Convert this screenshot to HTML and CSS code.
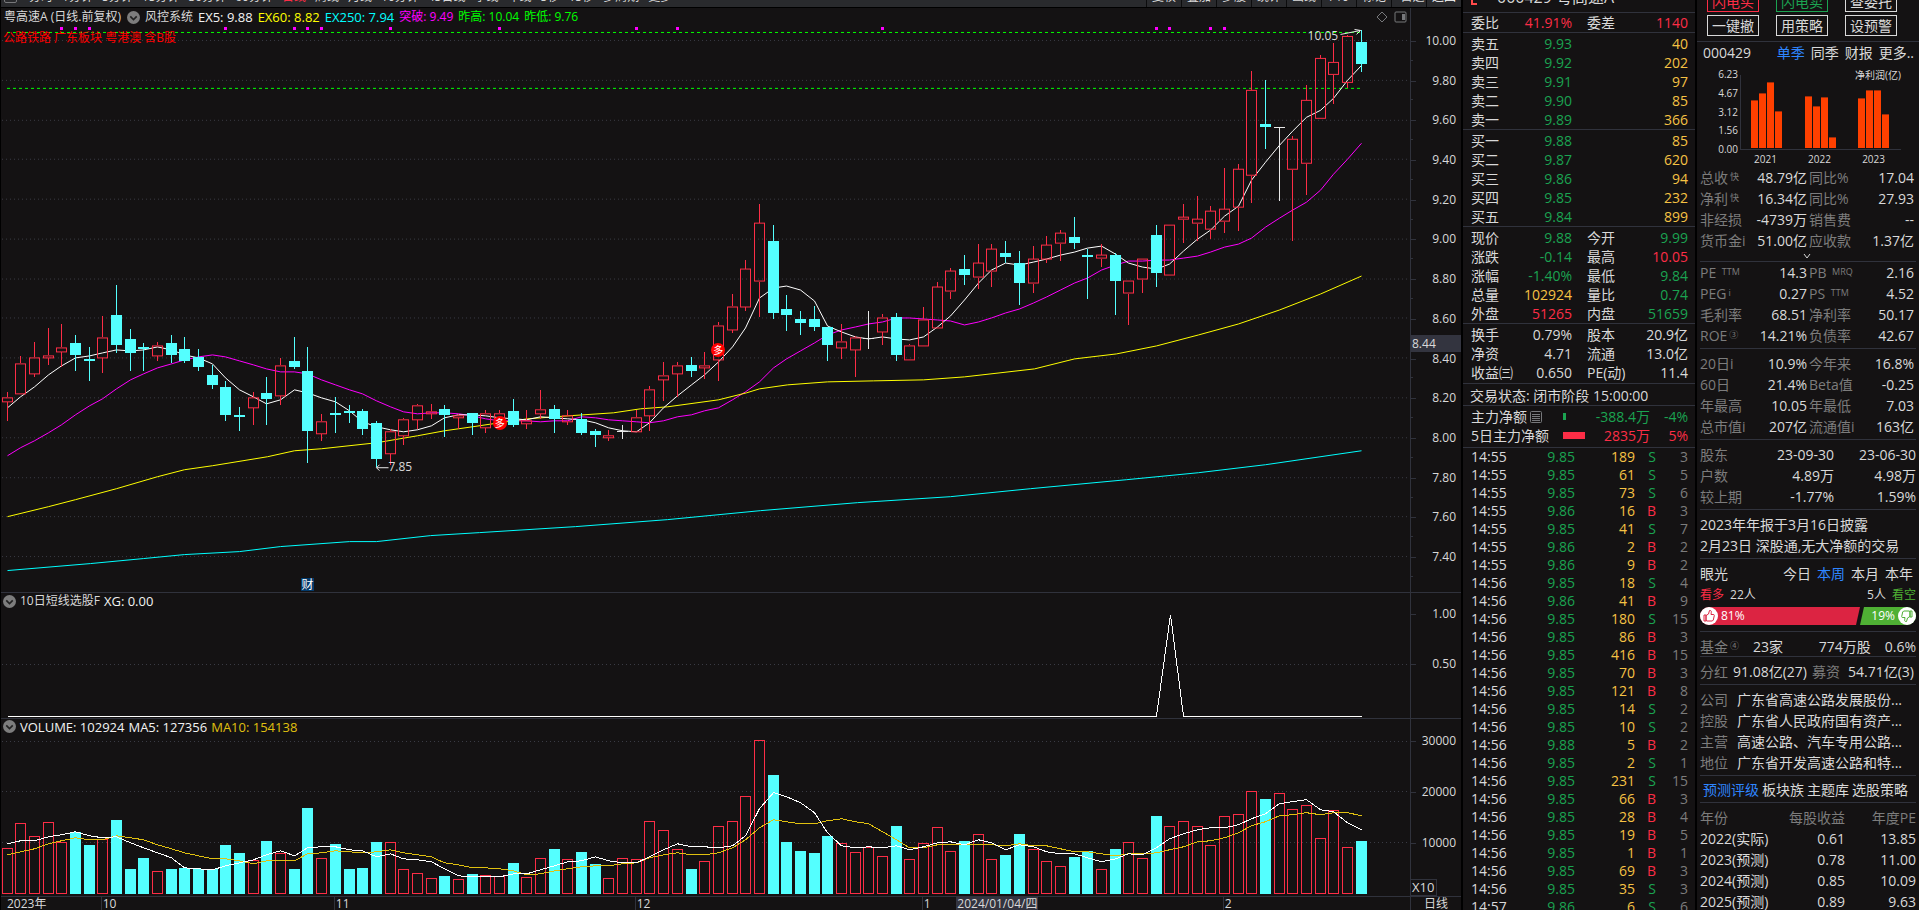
FILE: index.html
```html
<!DOCTYPE html>
<html lang="zh-CN">
<head>
<meta charset="utf-8">
<title>粤高速A 000429</title>
<link rel="stylesheet" href="styles.css">
</head>
<body>
<main class="app">
  <section class="chart">
    <nav class="toolbar">
      <div class="periods">
        <button class="menu-btn" aria-label="菜单"></button>
        <button>分时</button><button>1分钟</button><button>5分钟</button><button>15分钟</button><button>30分钟</button><button>60分钟</button><button class="active">日线</button><button>周线</button><button>月线</button><button>10分钟</button><button>45日线</button><button>季线</button><button>年线</button><button>5秒</button><button>15秒</button><button>多周期</button><button>更多&gt;</button>
      </div>
      <div class="tools">
        <button>复权</button><button>叠加</button><button>多股</button><button>统计</button><button>画线</button><button>F10</button><button>标记</button><button>+自选</button><button class="back">返回</button>
      </div>
    </nav>

    <div class="pane pane-main">
      <div class="plot">
        <svg id="kline" viewBox="1 8 1409 585" preserveAspectRatio="none" aria-hidden="true"></svg>
        <div class="legend">
          <span>粤高速A (日线.前复权)</span>
          <button class="fold" aria-label="指标"><svg viewBox="0 0 12 12"><path d="M3 5l3 3 3-3"/></svg></button>
          <span>风控系统</span>
          <span class="latin c-white">EX5: 9.88</span>
          <span class="latin c-yellow">EX60: 8.82</span>
          <span class="latin c-aqua">EX250: 7.94</span>
          <span class="c-magenta">突破: 9.49</span>
          <span class="c-lime">昨高: 10.04</span>
          <span class="c-lime">昨低: 9.76</span>
        </div>
        <p class="tags">公路铁路 广东板块 粤港澳 含B股</p>
        <div class="corner">
          <svg width="12" height="12" viewBox="0 0 12 12"><path d="M6 1l5 5-5 5-5-5z"/></svg>
          <svg width="13" height="12" viewBox="0 0 13 12"><rect x="1" y="1" width="11" height="10" rx="1"/><path class="solid" d="M8 3h3v6H8z"/></svg>
        </div>
        <span class="mark badge badge-a">多</span>
        <span class="mark badge badge-b">多</span>
        <span class="mark low">7.85</span>
        <span class="mark high">10.05</span>
        <span class="mark report">财</span>
      </div>
      <div class="axis">
        <span>10.00</span><span>9.80</span><span>9.60</span><span>9.40</span><span>9.20</span><span>9.00</span><span>8.80</span><span>8.60</span><span>8.40</span><span>8.20</span><span>8.00</span><span>7.80</span><span>7.60</span><span>7.40</span>
        <b class="cursor-price">8.44</b>
      </div>
    </div>

    <div class="pane pane-signal">
      <div class="plot">
        <svg id="signal" viewBox="1 594 1409 124" preserveAspectRatio="none" aria-hidden="true"></svg>
        <div class="legend">
          <button class="fold" aria-label="指标"><svg viewBox="0 0 12 12"><path d="M3 5l3 3 3-3"/></svg></button>
          <span>10日短线选股F</span>
          <span class="latin c-white">XG: 0.00</span>
        </div>
      </div>
      <div class="axis"><span>1.00</span><span>0.50</span></div>
    </div>

    <div class="pane pane-volume">
      <div class="plot">
        <svg id="volume" viewBox="1 719 1409 177" preserveAspectRatio="none" aria-hidden="true"></svg>
        <div class="legend">
          <button class="fold" aria-label="指标"><svg viewBox="0 0 12 12"><path d="M3 5l3 3 3-3"/></svg></button>
          <span class="latin c-white">VOLUME: 102924</span>
          <span class="latin c-white">MA5: 127356</span>
          <span class="latin c-gold">MA10: 154138</span>
        </div>
      </div>
      <div class="axis"><span>30000</span><span>20000</span><span>10000</span><b class="scale">X10</b></div>
    </div>

    <div class="timeline">
      <div class="months">
        <span class="m0">2023年</span><span class="m1">10</span><span class="m2">11</span><span class="m3">12</span><span class="m4">1</span><span class="m5">2</span>
        <b class="cursor-date">2024/01/04/四</b>
      </div>
      <span class="period">日线</span>
    </div>
  </section>

  <section class="quote">
    <h1 class="title"><i></i>000429 粤高速A</h1>
    <div class="pairs ratio"><span>委比</span><b class="up">41.91%</b><span>委差</span><b class="up">1140</b></div>
    <table class="book">
      <tr><th>卖五</th><td>9.93</td><td>40</td></tr>
      <tr><th>卖四</th><td>9.92</td><td>202</td></tr>
      <tr><th>卖三</th><td>9.91</td><td>97</td></tr>
      <tr><th>卖二</th><td>9.90</td><td>85</td></tr>
      <tr><th>卖一</th><td>9.89</td><td>366</td></tr>
    </table>
    <table class="book">
      <tr><th>买一</th><td>9.88</td><td>85</td></tr>
      <tr><th>买二</th><td>9.87</td><td>620</td></tr>
      <tr><th>买三</th><td>9.86</td><td>94</td></tr>
      <tr><th>买四</th><td>9.85</td><td>232</td></tr>
      <tr><th>买五</th><td>9.84</td><td>899</td></tr>
    </table>
    <div class="pairs">
      <span>现价</span><b class="down">9.88</b><span>今开</span><b class="down">9.99</b>
      <span>涨跌</span><b class="down">-0.14</b><span>最高</span><b class="up">10.05</b>
      <span>涨幅</span><b class="down">-1.40%</b><span>最低</span><b class="down">9.84</b>
      <span>总量</span><b class="vol">102924</b><span>量比</span><b class="down">0.74</b>
      <span>外盘</span><b class="up">51265</b><span>内盘</span><b class="down">51659</b>
    </div>
    <div class="pairs last">
      <span>换手</span><b>0.79%</b><span>股本</span><b>20.9亿</b>
      <span>净资</span><b>4.71</b><span>流通</span><b>13.0亿</b>
      <span>收益㈢</span><b>0.650</b><span>PE(动)</span><b>11.4</b>
    </div>
    <p class="status">交易状态: 闭市阶段 15:00:00</p>
    <div class="flow">
      <span class="flow-name">主力净额<svg width="12" height="12" viewBox="0 0 12 12"><rect x=".5" y=".5" width="11" height="11" rx="1"/><path d="M2 3.500h8M2 5.500h8M2 7.500h8M2 9.500h8"/></svg></span><i class="bar bar-down"></i><b class="down">-388.4万</b><b class="down">-4%</b>
      <span>5日主力净额</span><i class="bar bar-up"></i><b class="up">2835万</b><b class="up">5%</b>
    </div>
    <table class="ticks"><tbody id="ticks"></tbody></table>
  </section>

  <aside class="side">
    <div class="actions">
      <button class="buy">闪电买</button><button class="sell">闪电卖</button><button>查委托</button>
      <button>一键撤</button><button>用策略</button><button>设预警</button>
    </div>
    <div class="code-row"><b>000429</b><a href="#" class="on">单季</a><a href="#">同季</a><a href="#">财报</a><a href="#">更多..</a></div>
    <div class="profit">
      <div class="profit-axis"><span>6.23</span><span>4.67</span><span>3.12</span><span>1.56</span><span>0.00</span></div>
      <div class="profit-plot">
        <span class="profit-name">净利润(亿)</span>
        <div class="bars" id="bars"></div>
        <div class="years"><span>2021</span><span>2022</span><span>2023</span></div>
      </div>
    </div>
    <div class="metrics first">
      <span>总收<sup>快</sup></span><b>48.79亿</b><span>同比%</span><b>17.04</b>
      <span>净利<sup>快</sup></span><b>16.34亿</b><span>同比%</span><b>27.93</b>
      <span>非经损</span><b>-4739万</b><span>销售费</span><b>--</b>
      <span>货币金i</span><b>51.00亿</b><span>应收款</span><b>1.37亿</b>
      <button class="expand" aria-label="展开"><svg width="8" height="6" viewBox="0 0 8 6"><path d="M1 1l3 4 3-4"/></svg></button>
    </div>
    <div class="metrics tight">
      <span>PE <sup>TTM</sup></span><b>14.3</b><span>PB <sup class="wide">MRQ</sup></span><b>2.16</b>
      <span>PEG<sup>i</sup></span><b>0.27</b><span>PS <sup class="wide">TTM</sup></span><b>4.52</b>
      <span>毛利率</span><b>68.51</b><span>净利率</span><b>50.17</b>
      <span>ROE<sup>③</sup></span><b>14.21%</b><span>负债率</span><b>42.67</b>
    </div>
    <div class="metrics">
      <span>20日i</span><b>10.9%</b><span>今年来</span><b>16.8%</b>
      <span>60日</span><b>21.4%</b><span>Beta值</span><b>-0.25</b>
      <span>年最高</span><b>10.05</b><span>年最低</span><b>7.03</b>
      <span>总市值i</span><b>207亿</b><span>流通值i</span><b>163亿</b>
    </div>
    <table class="holders">
      <tr><th>股东</th><td>23-09-30</td><td>23-06-30</td></tr>
      <tr><th>户数</th><td>4.89万</td><td>4.98万</td></tr>
      <tr><th>较上期</th><td>-1.77%</td><td>1.59%</td></tr>
    </table>
    <div class="news"><p>2023年年报于3月16日披露</p><p>2月23日 深股通,无大净额的交易</p></div>
    <div class="vote">
      <div class="vote-head"><b>眼光</b><a href="#">今日</a><a href="#" class="on">本周</a><a href="#">本月</a><a href="#">本年</a></div>
      <div class="vote-count"><span class="bull">看多</span><span>22人</span><span class="right">5人</span><span class="bear">看空</span></div>
      <div class="vote-bar">
        <div class="bull-bar"><i><svg viewBox="0 0 18 18"><path d="M4 8h2v6H4zM6 13.500V8.500L8.500 7 9.500 3.500c1.500-.3 2 .7 1.800 1.800L11 7.500h2.800l.5 1-1 4.500-1 1H7z"/></svg></i>81%</div>
        <div class="bear-bar">19%<i><svg viewBox="0 0 18 18"><path d="M14 10h-2V4h2zM12 4.500v5L9.500 11l-1 3.500c-1.500.3-2-.7-1.800-1.800L7 10.500H4.200l-.5-1 1-4.500 1-1H11z"/></svg></i></div>
      </div>
    </div>
    <div class="line-row fund"><span>基金<sup>④</sup></span><b>23家</b><b class="right">774万股</b><b>0.6%</b></div>
    <div class="line-row bonus"><span>分红</span><b>91.08亿(27)</b><span>募资</span><b class="right">54.71亿(3)</b></div>
    <dl class="company">
      <dt>公司</dt><dd>广东省高速公路发展股份...</dd>
      <dt>控股</dt><dd>广东省人民政府国有资产...</dd>
      <dt>主营</dt><dd>高速公路、汽车专用公路...</dd>
      <dt>地位</dt><dd>广东省开发高速公路和特...</dd>
    </dl>
    <nav class="tabs"><a href="#" class="on">预测评级</a><a href="#">板块族</a><a href="#">主题库</a><a href="#">选股策略</a></nav>
    <table class="forecast">
      <tr><th>年份</th><th>每股收益</th><th>年度PE</th></tr>
      <tr><td>2022(实际)</td><td>0.61</td><td>13.85</td></tr>
      <tr><td>2023(预测)</td><td>0.78</td><td>11.00</td></tr>
      <tr><td>2024(预测)</td><td>0.85</td><td>10.09</td></tr>
      <tr><td>2025(预测)</td><td>0.89</td><td>9.63</td></tr>
    </table>
  </aside>
</main>
<script src="chart.js"></script>
</body>
</html>
```
FILE: styles.css
```css
:root {
  --bg: #141213;
  --line: #30323c;
  --text: #d9d9d9;
  --dim: #7c7c7c;
  --up: #fc2d46;
  --down: #1ba351;
  --gold: #f6c244;
  --cyan: #54ffff;
  --blue: #2f86ff;
}
* { box-sizing: border-box; margin: 0; padding: 0; }
body { background: #000; color: var(--text); font: 14px/19px "Open Sans", "Noto Sans CJK SC", sans-serif; overflow: hidden; }
button { background: none; border: 0; color: inherit; font: inherit; }
a { color: inherit; text-decoration: none; }
b, th, i, h1 { font-weight: 400; font-style: normal; }
table { border-collapse: collapse; }
.app { display: flex; gap: 2px; height: 100vh; overflow: hidden; white-space: nowrap; }

/* Chart column */
.chart { flex: 1; min-width: 0; display: flex; flex-direction: column; padding-left: 1px; font-size: 12px; line-height: 16px; }
.toolbar { display: flex; justify-content: space-between; flex: none; height: 25px; margin-top: -18px; margin-bottom: 1px; background: #292a2d; }
.periods { display: flex; align-items: center; gap: 9px; padding-left: 3px; padding-top: 4px; }
.menu-btn { width: 13px; height: 13px; margin-right: 3px; border: 1px solid #77787b; border-radius: 2px; }
.periods .active { color: var(--up); }
.tools { display: flex; }
.tools button { width: 35px; border-left: 1px solid #0c0c0d; padding-top: 4px; }
.tools .back { color: #fff; }
.pane { display: flex; min-height: 0; background: var(--bg); border-bottom: 1px solid var(--line); }
.pane-main { flex: 586 0 0; }
.pane-signal { flex: 125 0 0; }
.pane-volume { flex: 178 0 0; }
.plot { position: relative; flex: 1; min-width: 0; overflow: hidden; }
.plot > svg { display: block; width: 100%; height: 100%; shape-rendering: crispEdges; }
.axis { position: relative; display: flex; flex-direction: column; flex: none; width: 51px; padding-right: 5px; border-left: 1px solid var(--line); text-align: right; }
.axis span { position: relative; line-height: 20px; }
.axis span::before { content: ""; position: absolute; left: 0; top: 50%; width: 5px; height: 1px; background: var(--line); }
.pane-main .axis { padding-top: 13px; padding-bottom: 15px; }
.pane-main .axis span { display: flex; flex: 1; align-items: center; justify-content: flex-end; }
.pane-main .axis span::after { content: ""; position: absolute; left: 0; bottom: 0; width: 2px; height: 1px; background: var(--line); }
.pane-signal .axis { gap: 30px; padding-top: 11px; }
.pane-volume .axis { gap: 31px; padding-top: 12px; }
.cursor-price { position: absolute; left: 0; right: 0; top: 56%; background: #33343f; line-height: 17px; text-align: left; padding-left: 1px; }
.scale { position: absolute; left: 0; bottom: 0; border: 1px solid var(--line); border-left: 0; padding: 0 2px 0 1px; font-size: 13px; line-height: 15px; }
.legend { position: absolute; left: 3px; top: 0; display: flex; align-items: center; gap: 5px; line-height: 16px; padding-top: 1px; }
.pane-signal .legend, .pane-volume .legend { left: 1px; padding-top: 0; gap: 4px; }
.latin { font-size: 13px; }
.fold { width: 13px; height: 13px; margin: 0 0 0 1px; border-radius: 50%; background: #7d7d7d; }
.fold svg { display: block; fill: none; stroke: #222; stroke-width: 1.5; }
.c-white { color: #f2f2f2; }
.c-yellow { color: #ff0; }
.c-aqua { color: #0ff; }
.c-magenta { color: #f0f; }
.c-lime { color: #0f0; }
.c-gold { color: #e0c010; }
.tags { position: absolute; left: 2px; top: 22px; color: #f00; }
.corner { position: absolute; right: 3px; top: 3px; display: flex; gap: 6px; }
.corner svg { fill: none; stroke: #77787b; }
.corner .solid { fill: #77787b; stroke: none; }
.mark { position: absolute; }
.badge { width: 14px; height: 14px; margin: -7px 0 0 -7px; border-radius: 50%; background: #f00; color: #fff; font-size: 10px; line-height: 14px; text-align: center; }
.badge-a { left: 35.4%; top: 71.1%; }
.badge-b { left: 50.9%; top: 58.6%; }
.low { left: 27.5%; top: 77.3%; }
.high { right: 5.1%; top: 3.5%; }
.report { left: 21.3%; top: 97.6%; width: 13px; height: 13px; background: #033a6b; color: #fff; line-height: 13px; text-align: center; }
.timeline { display: flex; flex: none; height: 13px; background: var(--bg); line-height: 14px; overflow: hidden; }
.months { position: relative; display: flex; flex: 1; min-width: 0; }
.months > span { flex: 187 0 0; min-width: 0; border-left: 1px solid var(--line); text-indent: 1px; }
.months .m0 { flex-grow: 100; border: 0; text-indent: 6px; }
.months .m1 { flex-grow: 233; }
.months .m2 { flex-grow: 301; }
.months .m3 { flex-grow: 287; }
.months .m4 { flex-grow: 301; }
.cursor-date { position: absolute; left: 67.8%; background: #33343f; padding: 0 1px; }
.period { flex: none; width: 51px; border-left: 1px solid var(--line); padding-left: 13px; }

/* Quote column */
.quote { flex: none; width: 232px; overflow: hidden; background: var(--bg); }
.quote > * { border-bottom: 1px solid var(--line); }
.title { display: flex; gap: 20px; height: 33px; margin-top: -20px; padding-left: 8px; font-size: 16px; line-height: 34px; }
.title i { width: 6px; margin-bottom: 7px; border: solid #ff4a4a; border-width: 0 0 2px 2px; }
.pairs { display: grid; grid-template-columns: auto 1fr auto 1fr; padding: 1px 7px 0 8px; }
.pairs span { min-width: 42px; }
.pairs b { text-align: right; }
.pairs span:nth-child(4n+3) { margin-left: 15px; }
.pairs.ratio { padding-top: 0; }
.pairs.last { padding-bottom: 1px; margin-bottom: 2px; }
.up { color: var(--up); }
.down { color: var(--down); }
.vol { color: var(--gold); }
.book { display: block; padding: 1px 7px 0 8px; }
.book tbody { display: block; }
.book tr { display: grid; grid-template-columns: 42px 59px 1fr; }
.book th { text-align: left; }
.book td { color: var(--down); text-align: right; }
.book td:last-child { color: var(--gold); }
.status { padding-left: 7px; }
.flow { display: grid; grid-template-columns: 92px 22px 1fr 38px; padding: 1px 7px 2px 8px; }
.flow b { text-align: right; }
.flow-name { display: flex; align-items: center; gap: 3px; }
.flow-name svg { fill: none; stroke: #77787b; }
.bar { align-self: center; height: 7px; }
.bar-down { width: 3px; background: var(--down); }
.bar-up { background: var(--up); }
.quote .ticks { display: block; border: 0; padding: 0 7px 0 8px; }
.ticks tbody { display: block; }
.ticks tr { display: grid; grid-template-columns: 44px 60px 60px 21px 1fr; line-height: 18px; }
.ticks td { text-align: right; }
.ticks td:first-child { text-align: left; }
.ticks td:nth-child(2) { color: var(--down); }
.ticks td:nth-child(3) { color: var(--gold); }
.ticks td:last-child { color: var(--dim); }

/* Side column */
.side { flex: none; width: 222px; overflow: hidden; background: var(--bg); line-height: 21px; }
.side > * { margin: 0 3px; border-bottom: 1px solid var(--line); }
.side .actions { display: grid; grid-template-columns: repeat(3, 52px); gap: 3px 17px; margin: -9px 0 0; padding: 0 0 5px 10px; }
.actions button { height: 21px; border: 1px solid var(--text); line-height: 19px; }
.actions .buy { color: var(--up); border-color: var(--up); }
.actions .sell { color: var(--down); border-color: var(--down); }
.side .code-row { display: flex; gap: 6px; margin: 0; padding: 0 5px 1px 6px; border: 0; }
.code-row b { flex: 1; }
.on { color: var(--blue); }
.side .profit { display: flex; border: 0; font-size: 10px; line-height: 12px; padding: 4px 0 0; }
.profit-axis { display: flex; flex-direction: column; justify-content: space-between; width: 38px; height: 87px; text-align: right; }
.profit-plot { position: relative; flex: 1; margin: 7px 15px 0 2px; }
.profit-name { position: absolute; right: 0; top: -6px; }
.bars { display: flex; justify-content: space-between; height: 75px; padding: 0 12px 1px 10px; border: solid var(--line); border-width: 0 0 1px 1px; }
.group { display: flex; align-items: flex-end; gap: 1px; }
.group i { width: 7px; background: #ff4000; border-top: 1px solid #a02c08; }
.years { display: flex; justify-content: space-between; padding: 3px 16px 0 14px; }
.metrics { display: grid; grid-template-columns: 50px 57px 50px 57px; padding: 4px 2px 2px 0; }
.metrics b { text-align: right; }
.metrics span { color: var(--dim); }
.metrics span:nth-of-type(even) { padding-left: 2px; }
.metrics.first { padding-top: 2px; padding-bottom: 0; }
.metrics.tight { padding-top: 0; }
sup { font-size: 9px; line-height: 0; vertical-align: 3px; padding-left: 2px; }
.expand { grid-column: 1 / -1; height: 10px; line-height: 0; }
.expand svg { fill: none; stroke: var(--text); }
.holders { display: block; padding: 4px 0 2px; }
.holders tbody { display: block; }
.holders tr { display: grid; grid-template-columns: 50px 1fr 82px; }
.holders th, .line-row span { color: var(--dim); text-align: left; }
.holders td { text-align: right; }
.news { padding: 4px 0 2px; }
.vote { padding: 4px 0 6px; }
.vote-head { display: flex; gap: 6px; padding-right: 3px; }
.vote-head b { flex: 1; }
.vote-count { display: flex; gap: 6px; font-size: 12px; padding-bottom: 2px; height: 23px; }
.right { margin-left: auto; }
.bull { color: var(--up); }
.bear { color: #4fb034; }
.vote-bar { display: flex; height: 18px; color: #fff; font-size: 12px; line-height: 18px; }
.bull-bar { flex: 160 0 0; display: flex; gap: 3px; background: #dc2442; border-radius: 9px 0 0 9px; clip-path: polygon(0 0, 100% 0, calc(100% - 4px) 100%, 0 100%); }
.bear-bar { flex: 56 0 0; display: flex; gap: 3px; justify-content: flex-end; background: #4fb034; border-radius: 0 9px 9px 0; clip-path: polygon(4px 0, 100% 0, 100% 100%, 0 100%); }
.vote-bar i { width: 18px; height: 18px; border-radius: 50%; background: #fff; }
.vote-bar svg { display: block; fill: none; stroke: #dc2442; }
.bear-bar svg { stroke: #4fb034; }
.line-row { display: flex; }
.fund { gap: 14px; line-height: 18px; padding-top: 6px; }
.bonus { gap: 5px; padding: 4px 2px 2px 0; }
.bonus .right { margin-left: 0; flex: 1; text-align: right; }
.company { display: grid; grid-template-columns: 37px 1fr; padding: 4px 0 2px; }
.company dt { color: var(--dim); }
.tabs { display: flex; gap: 3px; padding: 3px 0 2px 3px; }
.side .forecast { display: block; border: 0; padding-top: 4px; }
.forecast tbody { display: block; }
.forecast tr { display: grid; grid-template-columns: 75px 70px 1fr; }
.forecast th { color: var(--dim); }
.forecast th, .forecast td { text-align: right; }
.forecast tr > :first-child { text-align: left; }
```
FILE: chart.js
```javascript
const NS = 'http://www.w3.org/2000/svg';
const RED = '#fc2d46', CYAN = '#54ffff', WHITE = '#e8e8e8', GRID = '#3a3b44';
const X = i => Math.floor(7 + 13.68 * i);

function add(svg, name, attrs) {
  const el = document.createElementNS(NS, name);
  for (const key in attrs) el.setAttribute(key, attrs[key]);
  svg.appendChild(el);
  return el;
}
const rect = (svg, x, y, width, height, fill) => add(svg, 'rect', { x, y, width, height, fill });
const hollow = (svg, x, y, w, h) =>
  add(svg, 'rect', { x: x + .5, y: y + .5, width: w - 1, height: Math.max(h - 1, 1), fill: 'none', stroke: RED });
const poly = (svg, pts, stroke) =>
  add(svg, 'polyline', { points: pts.map(p => (p[0] + .5) + ',' + (p[1] + .5)).join(' '), fill: 'none', stroke });
const series = (svg, ys, stroke) => poly(svg, ys.map((y, i) => [X(i), y]), stroke);
const dotted = (svg, y) =>
  add(svg, 'line', { x1: 2, x2: 1408, y1: y + .5, y2: y + .5, stroke: GRID, 'stroke-dasharray': '1 3' });

/* kind, high, body top, body bottom, low */
const candles = `u 393 398 402 422|u 357 364 394 395|u 343 358 374 378|u 329 356 358 366|u 325 348 352 368|d 336 344 356 372|d 348 360 362 382|u 317 338 358 374|d 285 316 346 354|d 330 340 354 372
d 344 348 350 372|u 343 346 356 362|d 336 344 356 364|d 338 350 362 364|d 350 358 368 372|d 366 376 386 390|d 382 388 416 422|d 408 416 418 432|u 393 398 408 426|d 378 394 400 426
u 359 366 396 406|d 338 362 368 370|d 348 372 432 464|u 415 422 434 442|d 398 414 416 434|d 406 412 414 424|d 410 412 430 436|d 422 424 460 468|u 430 432 454 466|u 419 420 436 446
u 405 406 420 430|u 405 412 414 420|d 406 410 416 438|u 415 416 418 430|d 414 414 424 436|u 411 414 428 434|u 411 414 424 426|d 400 412 426 428|u 411 421 424 430|u 391 410 414 420
d 406 410 420 434|u 411 416 422 426|d 414 420 434 436|d 430 432 436 448|u 431 436 438 442|w 426 432 432 440|u 411 418 432 433|u 387 390 416 432|u 363 376 380 402|u 363 366 374 398
d 358 366 372 378|u 353 366 368 380|u 323 326 360 382|u 294 307 330 334|u 260 269 307 312|u 204 223 281 318|d 225 241 314 320|d 295 310 316 332|d 312 320 324 336|d 307 320 328 332
d 328 328 346 362|u 325 342 348 360|u 337 338 350 378|w 312 339 339 350|u 315 318 332 346|d 314 318 356 362|u 345 346 360 361|u 308 320 346 347|u 282 287 328 328|u 268 271 291 299
d 255 269 275 285|u 244 263 277 289|u 244 249 271 287|d 241 253 257 263|d 251 263 283 305|u 246 259 283 293|u 236 245 259 263|u 230 233 243 261|d 217 237 243 249|d 249 255 257 299
u 244 255 258 267|d 253 255 281 316|u 281 281 293 326|u 259 259 279 293|d 225 235 273 287|u 225 225 275 275|u 204 217 219 243|u 196 219 223 241|u 206 211 229 239|u 168 209 221 233
u 164 169 207 231|u 71 90 175 203|d 80 124 127 149|w 127 127 127 201|u 136 139 169 241|u 85 100 163 195|u 55 58 118 118|u 43 62 74 104|u 35 36 82 88|d 30 42 64 72`
  .split(/[|\n]/).map(s => { const p = s.split(' '); return [p[0], ...p.slice(1).map(Number)]; });

const ex5 = [408,397,387,375,366,358,356,353,350,351,350,347,350,355,358,364,378,390,397,404,400,390,393,398,402,411,422,427,430,432,430,426,418,415,415,416,418,419,420,417,418,419,420,423,428,431,432,423,408,396,385,375,362,347,328,298,288,286,290,301,326,332,337,339,337,339,340,337,327,316,300,283,270,263,265,262,259,255,252,248,246,254,263,267,269,264,251,239,230,216,206,180,162,145,131,117,110,98,80,65];
const breakLine = [456,448,441,433,425,415,406,399,389,380,374,368,364,360,357,355,357,361,365,369,372,372,374,380,385,390,394,401,407,412,414,413,413,414,416,419,421,421,421,422,421,421,417,418,420,421,422,423,421,417,415,411,408,400,392,382,368,359,351,343,335,330,327,324,322,318,318,319,320,321,325,322,318,313,309,303,297,290,283,278,270,265,261,261,260,260,258,256,252,247,244,238,227,218,210,202,190,174,159,143];
const ex60 = [[7,517],[48,507],[75,500],[116,489],[157,477],[184,470],[212,466],[267,457],[294,451],[321,449],[376,443],[417,436],[444,431],[472,427],[499,423],[527,419],[568,416],[613,413],[640,409],[667,407],[718,400],[746,393],[759,389],[787,385],[827,382],[873,381],[923,380],[964,377],[1034,369],[1074,359],[1116,354],[1156,346],[1198,335],[1238,324],[1279,310],[1320,294],[1361,276]];
const ex250 = [[7,571],[90,564],[143,559],[184,555],[239,552],[280,547],[349,542],[376,542],[430,536],[479,533],[575,527],[667,520],[760,511],[857,503],[950,497],[1030,489],[1126,480],[1198,473],[1265,465],[1361,451]];
const signals = [4,5,6,16,21,22,23,28,36,46,49,64,84,85,88,89];

const k = document.getElementById('kline');
for (const y of [40,80,120,159,199,239,279,318,358,398,438,478,517,557]) dotted(k, y);
for (const y of [32, 88])
  add(k, 'line', { x1: 7, x2: 1360, y1: y + .5, y2: y + .5, stroke: '#0f0', 'stroke-dasharray': '3 3' });
for (const i of signals) rect(k, X(i) - 1, 27, 3, 3, '#f0f');
series(k, breakLine, '#f0f');
poly(k, ex60, '#ff0');
poly(k, ex250, '#0ff');
series(k, ex5, '#fff');
candles.forEach(([kind, hi, top, bottom, lo], i) => {
  const x = X(i);
  if (kind === 'd') {
    rect(k, x, hi, 1, lo - hi, CYAN);
    rect(k, x - 5, top, 11, Math.max(bottom - top, 2), CYAN);
  } else if (kind === 'w') {
    rect(k, x, hi, 1, lo - hi, WHITE);
    rect(k, x - 5, top, 11, 1, WHITE);
  } else {
    rect(k, x, hi, 1, top - hi, RED);
    rect(k, x, bottom + 1, 1, Math.max(lo - bottom - 1, 0), RED);
    hollow(k, x - 5, top, 11, bottom - top + 1);
  }
});
poly(k, [[388, 468], [376, 468], [379, 465]], WHITE);
poly(k, [[376, 468], [379, 471]], WHITE);
poly(k, [[1340, 34], [1360, 30], [1354, 29]], WHITE);
poly(k, [[1360, 30], [1356, 34]], WHITE);

const s = document.getElementById('signal');
dotted(s, 665);
poly(s, [[X(0), 716], [1156, 716], [1170, 615], [1183, 716], [1361, 716]], '#fff');

const volTop = [848,823,836,822,842,832,845,839,820,869,858,871,869,868,869,869,845,853,860,841,853,869,808,858,844,869,868,842,842,869,873,878,876,879,874,875,876,863,877,858,849,859,852,864,878,858,859,821,830,849,869,861,826,821,796,740,775,842,851,853,836,843,852,847,856,826,859,843,827,851,841,834,859,855,834,849,861,866,857,851,869,849,842,858,816,826,821,826,845,816,814,791,799,793,809,805,838,810,847,841];
const ma5 = [843,840,840,836,834,831,835,837,836,842,847,852,857,867,868,869,865,862,859,854,850,855,847,846,846,849,850,856,853,858,859,861,868,875,876,876,876,873,873,869,865,861,860,856,860,862,862,856,849,843,846,846,847,845,835,808,792,796,802,812,832,845,847,846,847,845,849,846,842,841,844,839,842,849,844,846,851,853,853,857,861,858,853,854,847,838,833,829,827,827,824,818,813,803,801,799,809,811,822,829];
const ma10 = [854,851,848,843,840,837,839,839,835,837,839,844,848,852,855,858,858,860,863,860,860,860,853,852,850,851,852,851,849,852,854,856,862,864,867,867,868,870,874,873,870,868,866,865,865,863,862,857,854,852,854,854,852,847,839,827,819,821,823,823,820,818,821,823,831,839,847,847,844,844,844,844,844,845,843,845,845,848,851,851,853,855,853,853,852,849,846,841,840,837,832,825,821,815,814,812,814,812,812,815];
const v = document.getElementById('volume');
for (const y of [741, 791, 842]) dotted(v, y);
volTop.forEach((y, i) => {
  if (candles[i][0] === 'd') rect(v, X(i) - 5, y, 11, 894 - y, CYAN);
  else hollow(v, X(i) - 5, y, 11, 894 - y);
});
series(v, ma10, '#e0c010');
series(v, ma5, '#fff');

const ticks = `14:55 9.85 189 S 3|14:55 9.85 61 S 5|14:55 9.85 73 S 6|14:55 9.86 16 B 3|14:55 9.85 41 S 7|14:55 9.86 2 B 2|14:55 9.86 9 B 2|14:56 9.85 18 S 4|14:56 9.86 41 B 9|14:56 9.85 180 S 15|14:56 9.85 86 B 3|14:56 9.85 416 B 15|14:56 9.85 70 B 3|14:56 9.85 121 B 8|14:56 9.85 14 S 2|14:56 9.85 10 S 2|14:56 9.88 5 B 2|14:56 9.85 2 S 1|14:56 9.85 231 S 15|14:56 9.85 66 B 3|14:56 9.85 28 B 4|14:56 9.85 19 B 5|14:56 9.85 1 B 1|14:56 9.85 69 B 3|14:56 9.85 35 S 3|14:57 9.86 6 S 6`.split('|');
const tbody = document.getElementById('ticks');
for (const line of ticks) {
  const row = tbody.insertRow();
  for (const part of line.split(' ')) {
    const cell = row.insertCell();
    cell.textContent = part;
    if (part === 'S') cell.className = 'down';
    if (part === 'B') cell.className = 'up';
  }
}

const profit = [[48, 55, 66, 37], [52, 42, 51, 11], [50, 58, 58, 34]];
const bars = document.getElementById('bars');
for (const year of profit) {
  const group = document.createElement('div');
  group.className = 'group';
  for (const h of year) {
    const bar = document.createElement('i');
    bar.style.height = h + 'px';
    group.appendChild(bar);
  }
  bars.appendChild(group);
}
```
